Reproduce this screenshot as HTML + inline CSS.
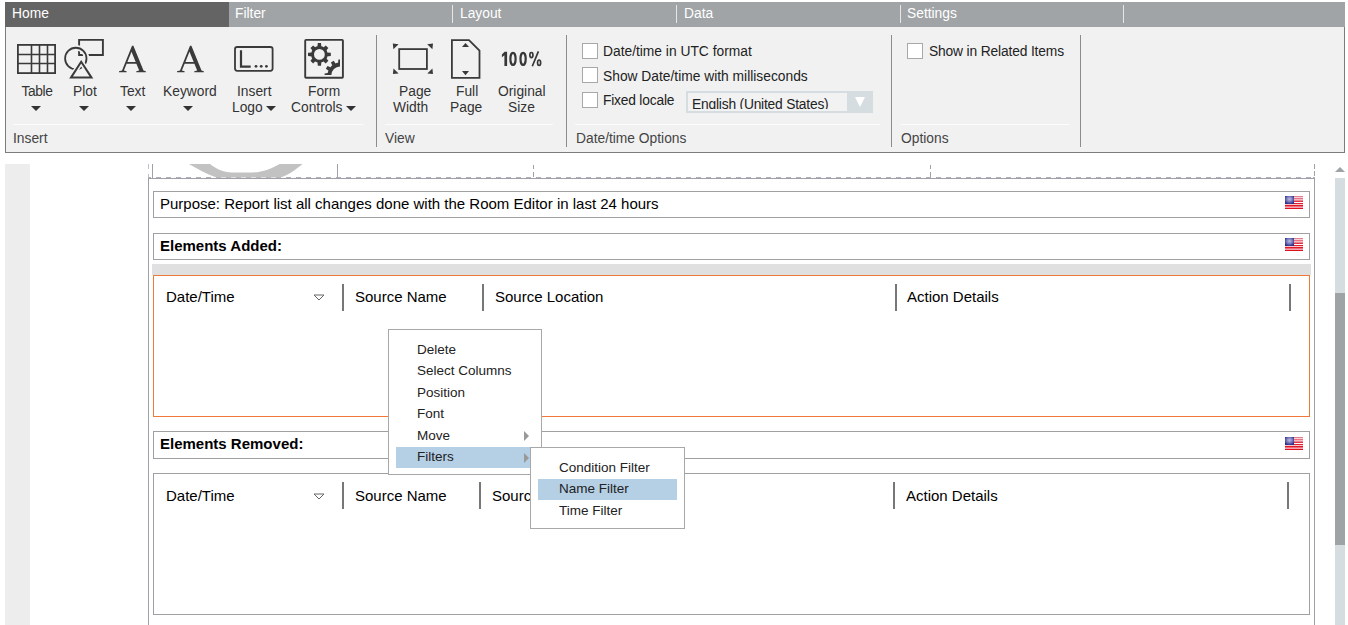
<!DOCTYPE html>
<html><head><meta charset="utf-8">
<style>
html,body{margin:0;padding:0;background:#fff;width:1348px;height:625px;overflow:hidden;position:relative}
body{font-family:"Liberation Sans",sans-serif}
.a{position:absolute}
.t{position:absolute;line-height:1;white-space:pre;font-size:13.8px;color:#333}
.w{color:#fff}
.sep{position:absolute;width:1px;background:#8c8c8c}
.gl{position:absolute;height:1px;background:#fcfcfc}
.cb{position:absolute;width:14px;height:14px;border:1px solid #a8a8a8;background:#fff}
.arr{position:absolute;width:0;height:0;border-left:5.5px solid transparent;border-right:5.5px solid transparent;border-top:5px solid #333}
.p{position:absolute;line-height:1;white-space:pre;font-size:15px;color:#000}
.box{position:absolute;border:1px solid #a0a0a0;background:#fff}
.cs{position:absolute;width:2px;height:27px;background:#777}
.fl{position:absolute;width:18px;height:13px}
.mi{position:absolute;line-height:1;white-space:pre;font-size:13.5px;color:#222}
</style></head><body>

<!-- TAB BAR -->
<div class="a" style="left:5px;top:2px;width:1340px;height:25px;background:#a0a4a6"></div>
<div class="a" style="left:5px;top:2px;width:224px;height:25px;background:#646464"></div>
<div class="t w" style="left:12px;top:7px">Home</div>
<div class="t w" style="left:235px;top:7px">Filter</div>
<div class="t w" style="left:460px;top:7px">Layout</div>
<div class="t w" style="left:684px;top:7px">Data</div>
<div class="t w" style="left:907px;top:7px">Settings</div>
<div class="a" style="left:452px;top:5px;width:1px;height:18px;background:#e6e6e6"></div>
<div class="a" style="left:676px;top:5px;width:1px;height:18px;background:#e6e6e6"></div>
<div class="a" style="left:900px;top:5px;width:1px;height:18px;background:#e6e6e6"></div>
<div class="a" style="left:1123px;top:5px;width:1px;height:18px;background:#e6e6e6"></div>

<!-- RIBBON BODY -->
<div class="a" style="left:5px;top:27px;width:1338px;height:125px;background:#f1f1f1;border:1px solid #7c7c7c;border-top:none"></div>
<div class="sep" style="left:376px;top:35px;height:112px"></div>
<div class="sep" style="left:566px;top:35px;height:112px"></div>
<div class="sep" style="left:891px;top:35px;height:112px"></div>
<div class="sep" style="left:1080px;top:35px;height:112px"></div>
<div class="gl" style="left:13px;top:124px;width:351px"></div>
<div class="gl" style="left:385px;top:124px;width:168px"></div>
<div class="gl" style="left:575px;top:124px;width:305px"></div>
<div class="gl" style="left:900px;top:124px;width:169px"></div>
<div class="t" style="left:13px;top:132px;color:#444">Insert</div>
<div class="t" style="left:385px;top:132px;color:#444">View</div>
<div class="t" style="left:576px;top:132px;color:#444">Date/time Options</div>
<div class="t" style="left:901px;top:132px;color:#444">Options</div>

<!-- ICONS -->
<svg class="a" style="left:0;top:30px" width="560" height="60" viewBox="0 30 560 60">
 <g fill="none" stroke="#3a3a3a">
  <rect x="17.9" y="44.9" width="37.2" height="28.2" stroke-width="1.8"/>
  <path d="M31.5 45V73M39.5 45V73M47.5 45V73M18 54.5H55M18 63.5H55" stroke-width="1.6"/>
  <path d="M79.1 55V39.9H102.9V55H79.1Z" stroke-width="1.9"/>
  <circle cx="75.8" cy="58.45" r="10.7" stroke="#f1f1f1" stroke-width="5.5"/>
  <circle cx="75.8" cy="58.45" r="10.7" stroke-width="1.8"/>
  <path d="M81.2 61.8L71 77.6H91.5Z" stroke="#f1f1f1" stroke-width="5" stroke-linejoin="miter"/>
  <path d="M81.2 61.8L71 77.6H91.5Z" stroke-width="2" stroke-linejoin="miter"/>
  <rect x="235" y="47" width="37.6" height="23.8" rx="2.2" stroke-width="1.8"/>
  <path d="M241 50.2V66.6H250.7" stroke-width="2.2"/>
  <rect x="305.2" y="39.9" width="37.7" height="37.8" rx="0.8" stroke-width="1.9"/>
  <rect x="399.2" y="49.1" width="27.7" height="19.9" stroke-width="1.8"/>
  <path d="M451.9 40.2H469L479.5 50.7V77.8H451.9Z" stroke-width="1.8"/>
 </g>
 <g fill="#3a3a3a">
  <circle cx="256" cy="66.3" r="1.4"/><circle cx="261.2" cy="66.3" r="1.4"/><circle cx="266.4" cy="66.3" r="1.4"/>
  <path fill-rule="evenodd" d="M119 72.3H126.6V71.2L123.9 70.6L126.65 63.8H136.4L139.2 70.6L136.3 71.2V72.3H145.8V71.2L143.5 70.6L133.4 45.8H132L122 70.6L119 71.2Z M131.5 51.7L135.7 62H127.4Z"/>
  <path transform="translate(58,0)" fill-rule="evenodd" d="M119 72.3H126.6V71.2L123.9 70.6L126.65 63.8H136.4L139.2 70.6L136.3 71.2V72.3H145.8V71.2L143.5 70.6L133.4 45.8H132L122 70.6L119 71.2Z M131.5 51.7L135.7 62H127.4Z"/>
  <path d="M392.8 43.6L398.6 44.2L393.4 49.3Z M433 43.6L427.2 44.2L432.4 49.3Z M392.9 74L393.5 68.6L398.6 73.6Z M433 74L432.4 68.6L427.3 73.6Z"/>
  <path d="M465.5 43L469 47H462Z M465.5 75.2L469 71H462Z"/>
 </g>
 <!-- gear -->
 <g transform="translate(319.4,54.4)" fill="#3a3a3a">
  <path fill-rule="evenodd" d="M-8.3 0A8.3 8.3 0 1 0 8.3 0A8.3 8.3 0 1 0 -8.3 0Z M-5.4 0A5.4 5.4 0 1 1 5.4 0A5.4 5.4 0 1 1 -5.4 0Z"/>
  <g id="tth">
   <path d="M-2 -7L-1.6 -11.4H1.6L2 -7Z"/>
   <path d="M-2 7L-1.6 11.4H1.6L2 7Z"/>
   <path d="M-7 -2L-11.4 -1.6V1.6L-7 2Z"/>
   <path d="M7 -2L11.4 -1.6V1.6L7 2Z"/>
  </g>
  <g transform="rotate(45)">
   <path d="M-2.1 -7L-1.9 -10.8H1.9L2.1 -7Z"/>
   <path d="M-2.1 7L-1.9 10.8H1.9L2.1 7Z"/>
   <path d="M-7 -2.1L-10.8 -1.9V1.9L-7 2.1Z"/>
   <path d="M7 -2.1L10.8 -1.9V1.9L7 2.1Z"/>
  </g>
 </g>
 <clipPath id="qc"><rect x="-20" y="-20" width="20" height="20"/></clipPath>
 <g clip-path="url(#qc)" fill="#3a3a3a" transform="translate(340,75)">
  <path fill-rule="evenodd" d="M-12.4 0A12.4 12.4 0 1 0 12.4 0A12.4 12.4 0 1 0 -12.4 0Z M-8.6 0A8.6 8.6 0 1 1 8.6 0A8.6 8.6 0 1 1 -8.6 0Z"/>
  <path d="M-1.9 -12L-1.6 -15.4H1.6L1.9 -12Z" transform="rotate(0)"/>
  <path d="M-1.9 -12L-1.6 -15.4H1.6L1.9 -12Z" transform="rotate(-30)"/>
  <path d="M-1.9 -12L-1.6 -15.4H1.6L1.9 -12Z" transform="rotate(-60)"/>
  <path d="M-1.9 -12L-1.6 -15.4H1.6L1.9 -12Z" transform="rotate(-90)"/>
 </g>
</svg>
<svg class="a" style="left:490px;top:45px" width="60" height="28" viewBox="490 45 60 28">
 <g fill="#383838"><path d="M504.6 51.7H507.1V66.1H504.4V55.3L501.9 57.3V54.6Z"/></g>
 <g fill="none" stroke="#383838">
  <ellipse cx="513" cy="58.9" rx="2.6" ry="6.05" stroke-width="2.2"/>
  <ellipse cx="523.1" cy="58.9" rx="2.6" ry="6.05" stroke-width="2.2"/>
  <ellipse cx="531.4" cy="55.1" rx="1.55" ry="2.6" stroke-width="1.7"/>
  <ellipse cx="539.1" cy="62.7" rx="1.55" ry="2.7" stroke-width="1.7"/>
  <path d="M538.4 51.4L532.3 66.3" stroke-width="1.7"/>
 </g>
</svg>

<!-- LABELS -->
<div class="t" style="left:21.5px;top:85px;letter-spacing:-0.4px">Table</div>
<div class="arr" style="left:31px;top:106px"></div>
<div class="t" style="left:73px;top:85px">Plot</div>
<div class="arr" style="left:79px;top:106px"></div>
<div class="t" style="left:120px;top:85px">Text</div>
<div class="arr" style="left:126px;top:106px"></div>
<div class="t" style="left:163px;top:85px">Keyword</div>
<div class="arr" style="left:183px;top:106px"></div>
<div class="t" style="left:237px;top:85px">Insert</div>
<div class="t" style="left:232px;top:101px">Logo</div>
<div class="arr" style="left:266px;top:106px"></div>
<div class="t" style="left:308px;top:85px">Form</div>
<div class="t" style="left:291px;top:101px">Controls</div>
<div class="arr" style="left:346px;top:106px"></div>
<div class="t" style="left:399px;top:85px">Page</div>
<div class="t" style="left:393px;top:101px">Width</div>
<div class="t" style="left:456px;top:85px">Full</div>
<div class="t" style="left:450px;top:101px">Page</div>
<div class="t" style="left:498px;top:85px">Original</div>
<div class="t" style="left:508px;top:101px">Size</div>

<!-- CHECKBOXES -->
<div class="cb" style="left:582px;top:43px"></div>
<div class="cb" style="left:582px;top:67px"></div>
<div class="cb" style="left:582px;top:92px"></div>
<div class="cb" style="left:907px;top:43px"></div>
<div class="t" style="left:603px;top:45px;color:#222">Date/time in UTC format</div>
<div class="t" style="left:603px;top:70px;color:#222">Show Date/time with milliseconds</div>
<div class="t" style="left:603px;top:94px;color:#222;letter-spacing:-0.2px">Fixed locale</div>
<div class="t" style="left:929px;top:45px;color:#222;letter-spacing:-0.15px">Show in Related Items</div>
<div class="a" style="left:686px;top:91px;width:187px;height:21.5px;background:#d6dde0"></div>
<div class="a" style="left:688px;top:93px;width:159px;height:18px;background:#f2f2f2"></div>
<div class="a" style="left:688px;top:93px;width:159px;height:16px;overflow:hidden">
 <div class="t" style="left:4px;top:5px;color:#222;letter-spacing:-0.2px">English (United States)</div>
</div>
<div class="a" style="left:855px;top:97px;width:0;height:0;border-left:5.6px solid transparent;border-right:5.6px solid transparent;border-top:10px solid #fff"></div>

<!-- CONTENT -->
<div class="a" style="left:5px;top:164px;width:25px;height:461px;background:#ededed"></div>
<!-- page borders -->
<div class="a" style="left:148px;top:178px;width:1px;height:447px;background:#a0a0a8"></div>
<div class="a" style="left:1314px;top:178px;width:1px;height:447px;background:#a0a0a8"></div>
<div class="a" style="left:148px;top:178px;width:1167px;height:1px;background:#a0a0a8"></div>
<div class="a" style="left:148px;top:177px;width:1167px;height:1px;background:repeating-linear-gradient(90deg,#b0b0b8 0 5px,transparent 5px 10px);background-position:-2px 0"></div>
<div class="a" style="left:148px;top:164px;width:1px;height:13px;background:repeating-linear-gradient(180deg,#c0c0c8 0 5px,transparent 5px 10px)"></div>
<div class="a" style="left:1314px;top:164px;width:1px;height:13px;background:repeating-linear-gradient(180deg,#a0a0a8 0 5px,transparent 5px 7px)"></div>
<div class="a" style="left:152px;top:164px;width:1px;height:14px;background:#a0a0a8"></div>
<div class="a" style="left:337px;top:164px;width:1px;height:14px;background:#a0a0a8"></div>
<div class="a" style="left:533px;top:165px;width:1px;height:4px;background:#a0a0a8"></div>
<div class="a" style="left:533px;top:172px;width:1px;height:5px;background:#a0a0a8"></div>
<div class="a" style="left:930px;top:165px;width:1px;height:4px;background:#a0a0a8"></div>
<div class="a" style="left:930px;top:172px;width:1px;height:5px;background:#a0a0a8"></div>
<svg class="a" style="left:180px;top:164px" width="130" height="14">
 <path d="M8.8 0C18 5 27 10.5 36.3 13.5H100.7C110 10.5 116 5 122.5 0H99.7C92 4.5 82 8.5 72.7 8.5H52C43 8.5 36 4.5 30 0Z" fill="#c2c2c2"/>
</svg>

<!-- Purpose -->
<div class="box" style="left:153px;top:191px;width:1155px;height:25px"></div>
<div class="p" style="left:160px;top:196px">Purpose: Report list all changes done with the Room Editor in last 24 hours</div>
<!-- Elements Added -->
<div class="box" style="left:153px;top:233px;width:1155px;height:25px"></div>
<div class="p" style="left:160px;top:238px;font-weight:bold">Elements Added:</div>
<div class="a" style="left:152px;top:264px;width:1159px;height:11px;background:#e0e0e0"></div>
<div class="box" style="left:153px;top:275px;width:1155px;height:140px;border-color:#f07838"></div>
<div class="p" style="left:166px;top:289px">Date/Time</div>
<svg class="a" style="left:313px;top:294px" width="12" height="7"><path d="M1 1H11L6 6Z" fill="none" stroke="#666" stroke-width="1"/></svg>
<div class="cs" style="left:342px;top:284px"></div>
<div class="p" style="left:355px;top:289px">Source Name</div>
<div class="cs" style="left:482px;top:284px"></div>
<div class="p" style="left:495px;top:289px">Source Location</div>
<div class="cs" style="left:895px;top:284px"></div>
<div class="p" style="left:907px;top:289px">Action Details</div>
<div class="cs" style="left:1289px;top:284px"></div>
<!-- Elements Removed -->
<div class="box" style="left:153px;top:431px;width:1155px;height:26px"></div>
<div class="p" style="left:160px;top:436px;font-weight:bold">Elements Removed:</div>
<div class="box" style="left:153px;top:473px;width:1155px;height:140px"></div>
<div class="p" style="left:166px;top:488px">Date/Time</div>
<svg class="a" style="left:313px;top:493px" width="12" height="7"><path d="M1 1H11L6 6Z" fill="none" stroke="#666" stroke-width="1"/></svg>
<div class="cs" style="left:342px;top:482px"></div>
<div class="p" style="left:355px;top:488px">Source Name</div>
<div class="cs" style="left:479px;top:482px"></div>
<div class="p" style="left:492px;top:488px">Source Location</div>
<div class="cs" style="left:893px;top:482px"></div>
<div class="p" style="left:906px;top:488px">Action Details</div>
<div class="cs" style="left:1287px;top:482px"></div>

<!-- flags -->
<svg class="fl" style="left:1285px;top:196px" viewBox="0 0 18 13"><use href="#flag"/></svg>
<svg class="fl" style="left:1285px;top:238px" viewBox="0 0 18 13"><use href="#flag"/></svg>
<svg class="fl" style="left:1285px;top:437px" viewBox="0 0 18 13"><use href="#flag"/></svg>
<svg width="0" height="0" style="position:absolute">
 <defs><radialGradient id="cg" cx="0.5" cy="0.4" r="0.6"><stop offset="0" stop-color="#c0c0e0"/><stop offset="0.6" stop-color="#7070b8"/><stop offset="1" stop-color="#303088"/></radialGradient><g id="flag">
  <rect y="0" width="18" height="1" fill="#e57f8c"/>
  <rect y="1" width="18" height="1" fill="#f6d0d6"/>
  <rect y="2" width="18" height="1" fill="#e8707f"/>
  <rect y="3" width="18" height="1" fill="#f4b8c2"/>
  <rect y="4" width="18" height="1" fill="#ea8592"/>
  <rect y="5" width="18" height="1" fill="#e03545"/>
  <rect y="6" width="18" height="1" fill="#ffffff"/>
  <rect y="7" width="18" height="1" fill="#e01e2e"/>
  <rect y="8" width="18" height="1" fill="#f7c8ce"/>
  <rect y="9" width="18" height="1" fill="#e01828"/>
  <rect y="10" width="18" height="1" fill="#ef6e7c"/>
  <rect y="11" width="18" height="1" fill="#f2a8b2"/>
  <rect y="12" width="18" height="1" fill="#e01020"/>
  <rect width="9" height="8" fill="url(#cg)"/>
 </g></defs>
</svg>

<!-- scrollbar -->
<div class="a" style="left:1335px;top:167px;width:0;height:0;border-left:5px solid transparent;border-right:5px solid transparent;border-bottom:5px solid #9ea3a5"></div>
<div class="a" style="left:1335px;top:178px;width:10px;height:447px;background:#d5dde0"></div>
<div class="a" style="left:1335px;top:293px;width:10px;height:252px;background:#9ea3a5"></div>

<!-- context menu -->
<div class="a" style="left:388px;top:329px;width:152px;height:144px;background:#fff;border:1px solid #a8a8a8"></div>
<div class="a" style="left:396px;top:447px;width:138px;height:21px;background:#b5cfe5"></div>
<div class="mi" style="left:417px;top:343px">Delete</div>
<div class="mi" style="left:417px;top:364px">Select Columns</div>
<div class="mi" style="left:417px;top:386px">Position</div>
<div class="mi" style="left:417px;top:407px">Font</div>
<div class="mi" style="left:417px;top:429px">Move</div>
<div class="mi" style="left:417px;top:450px">Filters</div>
<div class="a" style="left:524px;top:431px;width:0;height:0;border-top:5px solid transparent;border-bottom:5px solid transparent;border-left:5px solid #999"></div>
<div class="a" style="left:524px;top:453px;width:0;height:0;border-top:5px solid transparent;border-bottom:5px solid transparent;border-left:5px solid #999"></div>
<!-- submenu -->
<div class="a" style="left:530px;top:447px;width:153px;height:80px;background:#fff;border:1px solid #a8a8a8"></div>
<div class="a" style="left:538px;top:479px;width:139px;height:21px;background:#b5cfe5"></div>
<div class="mi" style="left:559px;top:461px">Condition Filter</div>
<div class="mi" style="left:559px;top:482px">Name Filter</div>
<div class="mi" style="left:559px;top:504px">Time Filter</div>

</body></html>
